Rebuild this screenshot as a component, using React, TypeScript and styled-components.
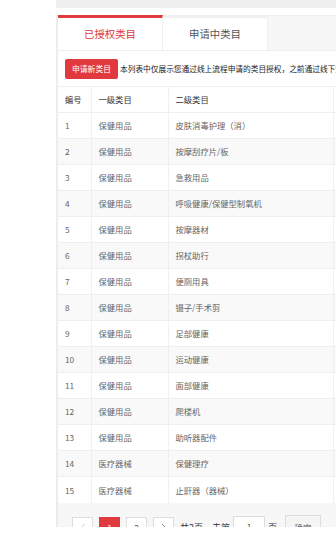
import React from "react";
import styled, { createGlobalStyle } from "styled-components";

const Global = createGlobalStyle`
  html, body { margin: 0; padding: 0; background: #fff; }
  body { font-family: "Noto Sans CJK SC", "Noto Sans", sans-serif; color: #333; }
  * { box-sizing: border-box; }
`;

const Viewport = styled.div`
  height: 527px;
  overflow: hidden;
  display: flex;
  align-items: flex-start;
`;

const Gutter = styled.div`
  width: 56px;
  flex: none;
`;

const Main = styled.div`
  flex: 1;
  min-width: 0;
`;

const TopBar = styled.div`
  height: 8px;
  background: #efefef;
  margin-bottom: 7px;
`;

const Panel = styled.div`
  border-left: 2px solid #ececec;
  overflow: hidden;
`;

const Tabs = styled.div`
  display: flex;
  height: 36px;
  border-bottom: 1px solid #eeeeee;
`;

const Tab = styled.div<{ $active?: boolean }>`
  width: 105px;
  flex: none;
  display: flex;
  align-items: center;
  justify-content: center;
  font-size: 10.4px;
  line-height: 1;
  background: #fff;
  color: ${(p) => (p.$active ? "#e0393e" : "#555")};
  border-top: 3px solid ${(p) => (p.$active ? "#e0393e" : "#f0f0f0")};
  border-right: 1px solid #eeeeee;
`;

const TabFill = styled.div`
  flex: 1;
  background: #f7f7f7;
  border-top: 1px solid #ececec;
`;

const Notice = styled.div`
  display: flex;
  align-items: center;
  height: 35px;
  padding-left: 7px;
  gap: 2px;
  white-space: nowrap;
  overflow: hidden;
`;

const RedButton = styled.div`
  flex: none;
  width: 53px;
  height: 20px;
  border-radius: 2px;
  background: #e0393e;
  color: #fff;
  font-size: 7.8px;
  display: flex;
  align-items: center;
  justify-content: center;
`;

const NoticeText = styled.span`
  font-size: 7.7px;
  color: #222;
`;

const Table = styled.table`
  border-collapse: collapse;
  table-layout: fixed;
  width: 360px;
  font-size: 8.3px;
  line-height: 1;
`;

const Col = styled.col<{ $w: number }>`
  width: ${(p) => p.$w}px;
`;

const Row = styled.tr<{ $shade?: boolean }>`
  height: 26px;
  background: ${(p) => (p.$shade ? "#f9f9f9" : "#fff")};
  border-top: 1px solid #efefef;
`;

const HeadCell = styled.th`
  text-align: left;
  font-weight: normal;
  color: #333;
  padding: 0 7px;
  border-right: 1px solid #f0f0f0;
  white-space: nowrap;
  overflow: hidden;
`;

const Cell = styled.td`
  color: #666;
  padding: 0 7px;
  border-right: 1px solid #f0f0f0;
  white-space: nowrap;
  overflow: hidden;
`;

const Pager = styled.div`
  background: #f7f7f7;
  padding: 14px 0 0 14px;
  height: 40px;
  display: flex;
  align-items: flex-start;
  gap: 6px;
  white-space: nowrap;
`;

const PageBtn = styled.div<{ $active?: boolean }>`
  flex: none;
  width: 21px;
  height: 22px;
  display: flex;
  align-items: center;
  justify-content: center;
  font-size: 8.5px;
  border: 1px solid ${(p) => (p.$active ? "#e0393e" : "#dddddd")};
  background: ${(p) => (p.$active ? "#e0393e" : "#fff")};
  color: ${(p) => (p.$active ? "#fff" : "#555")};
`;

const PagerText = styled.span`
  font-size: 9px;
  color: #333;
  line-height: 22px;
  display: flex;
  align-items: center;
  gap: 3px;
`;

const PageInput = styled.div`
  width: 32px;
  height: 22px;
  border: 1px solid #dddddd;
  background: #fff;
  font-size: 8.5px;
  color: #555;
  display: flex;
  align-items: center;
  justify-content: center;
  margin-top: -2px;
`;

const ConfirmBtn = styled.div`
  width: 36px;
  height: 24px;
  margin-top: -2px;
  margin-left: 2px;
  border: 1px solid #dddddd;
  background: #f5f5f5;
  font-size: 8.5px;
  color: #555;
  display: flex;
  align-items: center;
  justify-content: center;
`;

const Chevron = ({ dir }: { dir: "l" | "r" }) => (
  <svg width="8" height="10" viewBox="0 0 8 10" fill="none">
    <path
      d={dir === "l" ? "M6 1 L2 5 L6 9" : "M2 1 L6 5 L2 9"}
      stroke={dir === "l" ? "#c8c8c8" : "#777"}
      strokeWidth="0.9"
    />
  </svg>
);

const rows: [string, string][] = [
  ["保健用品", "皮肤消毒护理（消）"],
  ["保健用品", "按摩刮疗片/板"],
  ["保健用品", "急救用品"],
  ["保健用品", "呼吸健康/保健型制氧机"],
  ["保健用品", "按摩器材"],
  ["保健用品", "拐杖助行"],
  ["保健用品", "便厕用具"],
  ["保健用品", "镊子/手术剪"],
  ["保健用品", "足部健康"],
  ["保健用品", "运动健康"],
  ["保健用品", "面部健康"],
  ["保健用品", "爬楼机"],
  ["保健用品", "助听器配件"],
  ["医疗器械", "保健理疗"],
  ["医疗器械", "止鼾器（器械）"],
];

export default function App() {
  return (
    <>
      <Global />
      <Viewport>
        <Gutter />
        <Main>
          <TopBar />
          <Panel>
            <Tabs>
              <Tab $active>已授权类目</Tab>
              <Tab>申请中类目</Tab>
              <TabFill />
            </Tabs>
            <Notice>
              <RedButton>申请新类目</RedButton>
              <NoticeText>
                本列表中仅展示您通过线上流程申请的类目授权，之前通过线下流程申请的类目授权请联系业务人员查询
              </NoticeText>
            </Notice>
            <Table>
              <colgroup>
                <Col $w={33} />
                <Col $w={77} />
                <Col $w={165} />
                <Col $w={85} />
              </colgroup>
              <thead>
                <Row>
                  <HeadCell>编号</HeadCell>
                  <HeadCell>一级类目</HeadCell>
                  <HeadCell>二级类目</HeadCell>
                  <HeadCell>授权状态</HeadCell>
                </Row>
              </thead>
              <tbody>
                {rows.map(([a, b], i) => (
                  <Row key={i} $shade={i % 2 === 1}>
                    <Cell>{i + 1}</Cell>
                    <Cell>{a}</Cell>
                    <Cell>{b}</Cell>
                    <Cell>已授权</Cell>
                  </Row>
                ))}
              </tbody>
            </Table>
            <Pager>
              <PageBtn>
                <Chevron dir="l" />
              </PageBtn>
              <PageBtn $active>1</PageBtn>
              <PageBtn>2</PageBtn>
              <PageBtn>
                <Chevron dir="r" />
              </PageBtn>
              <PagerText>
                共2页，去第<PageInput>1</PageInput>页
              </PagerText>
              <ConfirmBtn>确定</ConfirmBtn>
            </Pager>
          </Panel>
        </Main>
      </Viewport>
    </>
  );
}
